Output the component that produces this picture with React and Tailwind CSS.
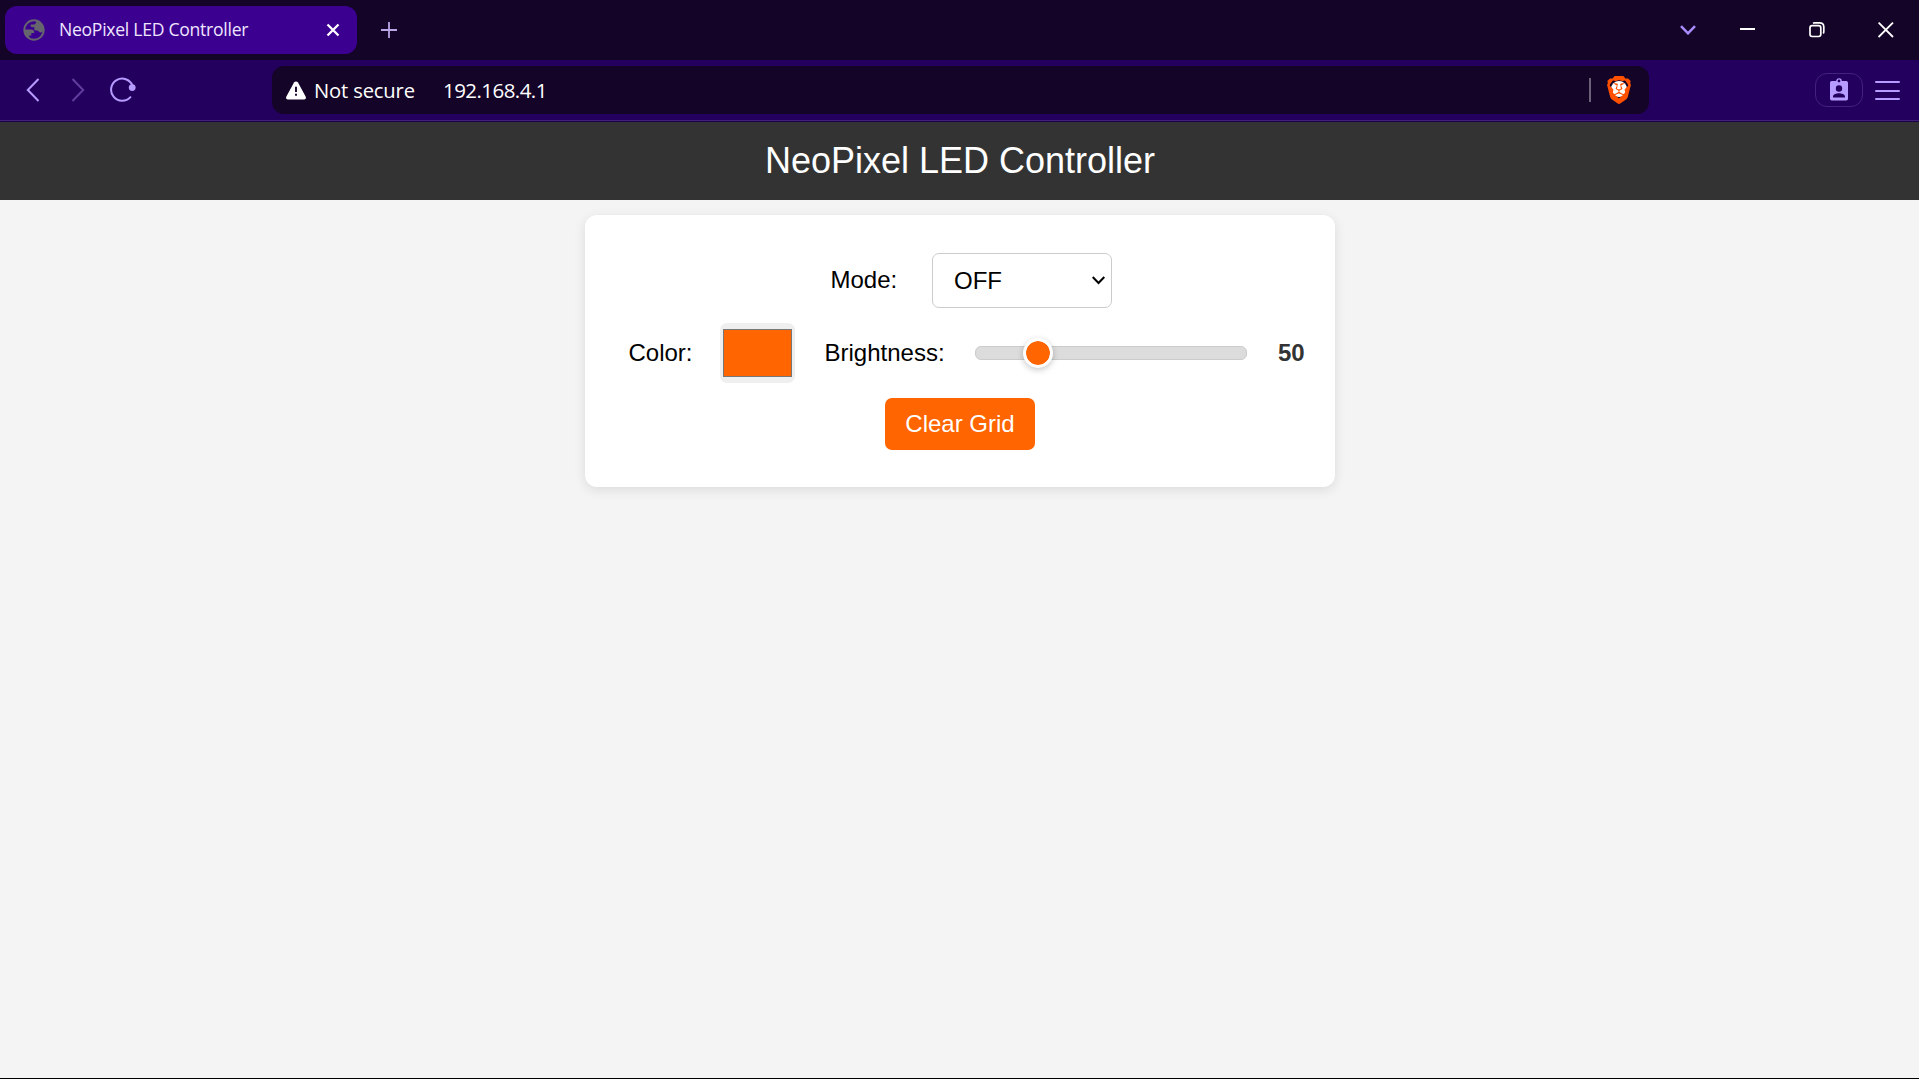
import React from "react";
import { SiBrave } from "react-icons/si";

function Globe() {
  return (
    <svg width="22" height="22" viewBox="0 0 22 22" fill="none">
      <circle cx="11" cy="11" r="9.7" stroke="#66656e" strokeWidth="1.9" />
      <path
        d="M1.5 10.5H8.4C10.6 10.5 11.4 11.8 11.2 13.9H8.3V16.6H5.8L7.3 20C3.6 18.4 1.2 15 1.5 10.5Z"
        fill="#66656e"
      />
      <path
        d="M13.6 1.6C18 3 20.8 6.8 20.5 11.6C19.4 13.6 17.6 14 16.3 13C15.4 12.2 14.8 11.6 13 11.6C11.2 11.4 10.7 9.6 11.6 8.3H9.6C7.6 8.2 7.2 6.4 7.8 5.4H11.2C12.6 5.1 13 4.2 13.6 1.6Z"
        fill="#66656e"
      />
    </svg>
  );
}

function TabStrip() {
  return (
    <div className="flex h-[60px] items-center justify-between bg-[#140427] pl-[5px]">
      <div className="flex h-full items-center">
        <div className="flex h-[48px] w-[352px] items-center rounded-[12px] bg-[#3c0090] pl-[18px] pr-[16px]">
          <Globe />
          <span className="ml-[14px] flex-1 whitespace-nowrap pb-[2px] text-[17.6px] tracking-[-0.28px] text-[#eee6ff]">
            NeoPixel LED Controller
          </span>
          <svg width="16" height="16" viewBox="0 0 16 16" stroke="#fff" strokeWidth="2.3">
            <path d="M2.5 2.5L13.5 13.5M13.5 2.5L2.5 13.5" />
          </svg>
        </div>
        <svg className="ml-[24px]" width="16" height="16" viewBox="0 0 16 16" stroke="#b9a6e6" strokeWidth="1.8">
          <path d="M8 0V16M0 8H16" />
        </svg>
      </div>
      <div className="flex items-center pr-[25px]">
        <svg width="16" height="10" viewBox="0 0 16 10" fill="none" stroke="#a98dff" strokeWidth="2.5">
          <path d="M1 1.2L8 8.3L15 1.2" />
        </svg>
        <svg className="ml-[44px]" width="16" height="16" viewBox="0 0 16 16" stroke="#fff" strokeWidth="2">
          <path d="M0 7H15" />
        </svg>
        <svg className="ml-[53px]" width="16" height="16" viewBox="0 0 16 16" fill="none" stroke="#fff" strokeWidth="1.7">
          <rect x="1" y="3.7" width="10.8" height="10.8" rx="2.2" />
          <path d="M4 1.3C4.6 1 5 .9 5.5 .9H10.5C13 .9 14.8 2.6 14.8 5V9.5C14.8 10.3 14.6 11 14.2 11.5" />
        </svg>
        <svg className="ml-[53px]" width="16" height="16" viewBox="0 0 16 16" stroke="#fff" strokeWidth="1.8">
          <path d="M.6 .6L15 15M15 .6L.6 15" />
        </svg>
      </div>
    </div>
  );
}

function Toolbar() {
  return (
    <div className="flex h-[62px] items-center border-b border-[#1a0045] bg-[#24005e] shadow-[inset_0_-1px_0_#42207c]">
      <div className="flex w-[272px] shrink-0 items-center pb-px pl-[26px]">
        <svg width="14" height="24" viewBox="0 0 14 24" fill="none" stroke="#b79cff" strokeWidth="2">
          <path d="M12.5 1L1.8 12L12.5 23" />
        </svg>
        <svg className="ml-[31px]" width="14" height="24" viewBox="0 0 14 24" fill="none" stroke="#5f3d9f" strokeWidth="2">
          <path d="M1.5 1L12.2 12L1.5 23" />
        </svg>
        <svg className="ml-[25px]" width="26" height="26" viewBox="0 0 26 26" fill="none">
          <path
            d="M22.5 8.6A11.1 11.1 0 1 0 20.4 20.2"
            stroke="#b79cff"
            strokeWidth="2"
            strokeLinecap="round"
          />
          <circle cx="22.2" cy="10.6" r="3.4" fill="#b79cff" />
        </svg>
      </div>
      <div className="-mt-px flex h-[48px] w-[1377px] items-center rounded-[12px] bg-[#140427] pl-[14px] pr-[17px]">
        <svg width="20" height="19" viewBox="0 0 20 19">
          <path
            d="M8 1.5C8.9 .1 11.1 .1 12 1.5L19.6 15.6C20.4 17.1 19.6 18.4 18.2 18.4H1.8C.4 18.4 -.4 17.1 .4 15.6Z"
            fill="#fff"
          />
          <path d="M10 5.8V11M10 12.8V14.8" stroke="#140427" strokeWidth="1.9" />
        </svg>
        <span className="ml-[8px] w-[129px] whitespace-nowrap text-[20.2px] tracking-[-0.15px] text-white">Not secure</span>
        <span className="flex-1 text-[20.5px] tracking-[-0.55px] text-white">192.168.4.1</span>
        <div className="h-[24px] w-[2px] bg-[#6b6179]" />
        <div className="relative ml-[15px] flex h-[28px] w-[26px] items-center justify-center">
          <div className="absolute left-[5px] top-[5px] h-[16px] w-[16px] rounded-full bg-white" />
          <SiBrave className="relative shrink-0 text-[#ff5000]" size={28} />
        </div>
      </div>
      <div className="-mt-px ml-[166px] flex h-[34px] w-[48px] items-center justify-center rounded-[12px] border border-[#43217e]">
        <svg className="-mt-px" width="18" height="23" viewBox="0 0 18 23">
          <path
            fillRule="evenodd"
            d="M1.8 3H16.2A1.8 1.8 0 0 1 18 4.8V20.7A1.8 1.8 0 0 1 16.2 22.5H1.8A1.8 1.8 0 0 1 0 20.7V4.8A1.8 1.8 0 0 1 1.8 3ZM9 7.3A3.2 3.2 0 1 0 9 13.7A3.2 3.2 0 1 0 9 7.3ZM3 19.5H15V18.4C15 16.3 11.5 15.2 9 15.2C6.5 15.2 3 16.3 3 18.4Z"
            fill="#b79cff"
          />
          <circle cx="9" cy="3" r="2.1" fill="#24005e" stroke="#b79cff" strokeWidth="1.4" />
        </svg>
      </div>
      <div className="ml-[12px] flex w-[25px] flex-col gap-[6.5px]">
        <div className="h-[2px] rounded-full bg-[#b79cff]" />
        <div className="h-[2px] rounded-full bg-[#b79cff]" />
        <div className="h-[2px] rounded-full bg-[#b79cff]" />
      </div>
    </div>
  );
}

function ControlCard() {
  return (
    <main className="mx-auto mt-[15px] flex h-[272px] w-[750px] flex-col rounded-[12px] bg-white pt-[38px] text-[24px] leading-[28px] text-black shadow-[0_3px_12px_rgba(0,0,0,0.1)]">
      <div className="flex h-[55px] items-center pl-[246px]">
        <label className="w-[101px] pb-px">Mode:</label>
        <div className="flex h-[55px] w-[180px] items-center justify-between rounded-[7px] border border-[#ccc] pl-[21.5px] pr-[5.5px]">
          <span>OFF</span>
          <svg width="13" height="9" viewBox="0 0 13 9" fill="none" stroke="#000" strokeWidth="2">
            <path d="M.7 1L6.5 7L12.3 1" />
          </svg>
        </div>
      </div>
      <div className="mt-[15px] flex h-[60px] items-center pl-[44px]">
        <label className="w-[91px]">Color:</label>
        <div className="flex h-[60px] w-[75px] items-center justify-center rounded-[7px] bg-[#efefef]">
          <div className="h-[48px] w-[69px] border border-[#777] bg-[#ff6500]" />
        </div>
        <label className="ml-[30px] w-[150px]">Brightness:</label>
        <div className="relative h-[14px] w-[272px] rounded-[6px] border border-[#cbcbcb] bg-[#dcdcdc]">
          <div className="absolute left-[47px] top-[-9px] h-[30px] w-[30px] rounded-full border-[3px] border-white bg-[#ff6500] bg-clip-padding shadow-[0_2px_6px_rgba(0,0,0,0.22)]" />
        </div>
        <span className="ml-[31.5px] font-bold text-[#333]">50</span>
      </div>
      <button className="mx-auto mt-[15px] h-[52px] w-[150px] rounded-[7px] bg-[#ff6500] pb-px pl-px text-white">
        Clear Grid
      </button>
    </main>
  );
}

export default function App() {
  return (
    <div className="flex h-[1079px] w-[1919px] flex-col overflow-hidden border-b border-black bg-[#f4f4f4] font-['Open_Sans','Noto_Sans',sans-serif]">
      <TabStrip />
      <Toolbar />
      <div className="flex-1 font-['Liberation_Sans',Arial,sans-serif]">
        <header className="flex h-[78px] items-center justify-center bg-[#333] pl-px text-[36px] text-white">
          <h1>NeoPixel LED Controller</h1>
        </header>
        <ControlCard />
      </div>
    </div>
  );
}
